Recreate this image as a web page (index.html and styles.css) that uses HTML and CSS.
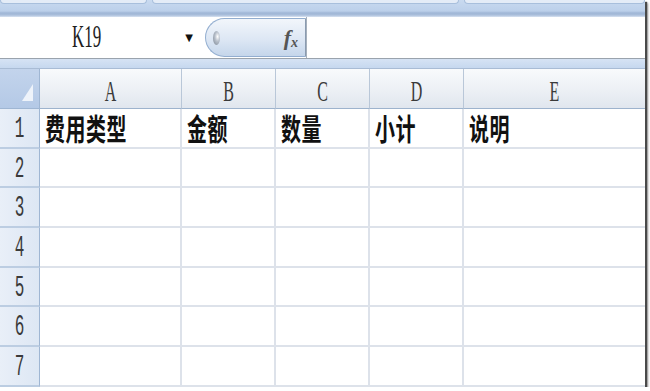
FILE: index.html
```html
<!DOCTYPE html>
<html lang="zh-CN">
<head>
    <meta charset="UTF-8">
    <meta name="viewport" content="width=device-width, initial-scale=1.0">
    <title>费用表</title>
    <link rel="stylesheet" href="styles.css">
</head>
<body>
    <div class="frame">
        <!-- ribbon edge -->
        <div class="ribbon-edge">
            <div class="tab tab-1"></div>
            <div class="tab tab-2"></div>
            <div class="tab tab-3"></div>
        </div>

        <!-- formula bar -->
        <div class="formula-bar">
            <div class="name-box">
                <span class="name-text tall">K19</span>
                <span class="drop">&#9660;</span>
            </div>
            <div class="fx-button">
                <span class="grip"></span>
                <span class="fx">f<sub>x</sub></span>
            </div>
            <div class="formula-input"></div>
        </div>
        <div class="bar-gap"></div>

        <!-- sheet -->
        <div class="sheet">
            <div class="corner"><span class="corner-mark"></span></div>
            <div class="col-head"><span class="tall">A</span></div>
            <div class="col-head"><span class="tall">B</span></div>
            <div class="col-head"><span class="tall">C</span></div>
            <div class="col-head"><span class="tall">D</span></div>
            <div class="col-head last"><span class="tall">E</span></div>

            <div class="row-head"><span class="tall">1</span></div>
            <div class="cell"><span class="cjk">费用类型</span></div>
            <div class="cell"><span class="cjk">金额</span></div>
            <div class="cell"><span class="cjk">数量</span></div>
            <div class="cell"><span class="cjk">小计</span></div>
            <div class="cell last"><span class="cjk">说明</span></div>

            <div class="row-head"><span class="tall">2</span></div>
            <div class="cell"></div><div class="cell"></div><div class="cell"></div><div class="cell"></div><div class="cell last"></div>

            <div class="row-head"><span class="tall">3</span></div>
            <div class="cell"></div><div class="cell"></div><div class="cell"></div><div class="cell"></div><div class="cell last"></div>

            <div class="row-head"><span class="tall">4</span></div>
            <div class="cell"></div><div class="cell"></div><div class="cell"></div><div class="cell"></div><div class="cell last"></div>

            <div class="row-head"><span class="tall">5</span></div>
            <div class="cell"></div><div class="cell"></div><div class="cell"></div><div class="cell"></div><div class="cell last"></div>

            <div class="row-head"><span class="tall">6</span></div>
            <div class="cell"></div><div class="cell"></div><div class="cell"></div><div class="cell"></div><div class="cell last"></div>

            <div class="row-head"><span class="tall">7</span></div>
            <div class="cell"></div><div class="cell"></div><div class="cell"></div><div class="cell"></div><div class="cell last"></div>
        </div>
    </div>
</body>
</html>
```

FILE: styles.css
```css
body {
    margin: 0;
    background: #ffffff;
    font-family: "Liberation Serif", "DejaVu Serif", serif;
}
.frame {
    width: 645px;
    height: 387px;
    background: #ffffff;
    overflow: hidden;
    box-shadow: 2px 2px 1px #4a4a4a, 3px 3px 2px #9a9a9a;
}
.tall {
    display: inline-block;
    transform: scaleY(1.8);
}

/* Ribbon edge */
.ribbon-edge {
    height: 17px;
    display: flex;
    gap: 5px;
    align-items: flex-start;
    background: linear-gradient(#c9daf0 0, #bcd0ea 11px, #9fb6d6 13px, #a9bedb 15px, #d8e3f1 17px);
}
.tab {
    height: 3px;
    background: #e4ecf7;
    border: 1px solid #a8bfdc;
    border-top: none;
    border-radius: 0 0 4px 4px;
}
.tab-1 { width: 145px; }
.tab-2 { width: 305px; }
.tab-3 { flex: 1; }

/* Formula bar */
.formula-bar {
    height: 41px;
    display: flex;
    background: #ffffff;
    border-bottom: 1px solid #9aa3ad;
}
.name-box {
    width: 205px;
    display: flex;
    align-items: center;
    font-size: 17px;
    color: #1e1e1e;
}
.name-text {
    margin-left: 72px;
}
.drop {
    margin-left: 84px;
    font-size: 10px;
    color: #111;
    font-family: "DejaVu Sans", sans-serif;
}
.fx-button {
    width: 99px;
    margin: 1px 0;
    display: flex;
    align-items: center;
    justify-content: space-between;
    border: 1px solid #93aed0;
    border-right-color: #8a9bb0;
    border-radius: 20px 0 0 20px;
    background: linear-gradient(#f2f6fb, #dde7f4 55%, #c5d6eb);
}
.grip {
    width: 7px;
    height: 14px;
    margin-left: 7px;
    border-radius: 50%;
    background: radial-gradient(ellipse at 65% 40%, #ffffff 0, #b7bfca 40%, #7a8592 100%);
}
.fx {
    margin-right: 7px;
    font-family: "Liberation Serif", serif;
    font-style: italic;
    font-weight: bold;
    font-size: 22px;
    color: #555;
}
.fx sub {
    font-size: 14px;
    vertical-align: -2px;
}
.formula-input {
    flex: 1;
    border-left: 1px solid #a6b0bc;
}
.bar-gap {
    height: 9px;
    background: linear-gradient(#d6e3f4, #c6d8ef);
    border-bottom: 1px solid #a9bcd5;
}

/* Sheet grid */
.sheet {
    display: grid;
    grid-template-columns: 40px 142px 94px 94px 94px 181px;
    grid-template-rows: 40px repeat(7, 39.7px);
}
.corner {
    position: relative;
    background: linear-gradient(#c3d4ec, #b4c9e6);
    border-right: 1px solid #9fb6d3;
    border-bottom: 1px solid #9fb6d3;
}
.corner-mark {
    position: absolute;
    right: 6px;
    bottom: 7px;
    width: 0;
    height: 0;
    border-left: 11px solid transparent;
    border-bottom: 17px solid #eef3fa;
}
.col-head {
    display: flex;
    align-items: center;
    justify-content: center;
    padding-top: 6px;
    font-size: 16px;
    color: #3a3a3a;
    background: linear-gradient(#f8fafc, #ebeff4 60%, #e0e6ee);
    border-right: 1px solid #b9c7d8;
    border-bottom: 1px solid #9db3cd;
}
.row-head {
    display: flex;
    align-items: center;
    justify-content: center;
    padding-top: 4px;
    font-family: "Liberation Mono", monospace;
    font-size: 16px;
    color: #3a3a3a;
    background: linear-gradient(90deg, #e9eff8, #dde7f4);
    border-right: 1px solid #9fb6d3;
    border-bottom: 2px solid #bccde2;
}
.cell {
    display: flex;
    align-items: center;
    padding-left: 5px;
    border-right: 2px solid #dde2ea;
    border-bottom: 2px solid #dde2ea;
}
.last {
    border-right: none;
}
.cjk {
    display: inline-block;
    font-family: "Noto Sans CJK SC", sans-serif;
    font-weight: 700;
    font-size: 20px;
    color: #111;
    letter-spacing: 0.5px;
    transform: scaleY(1.5);
}
```
